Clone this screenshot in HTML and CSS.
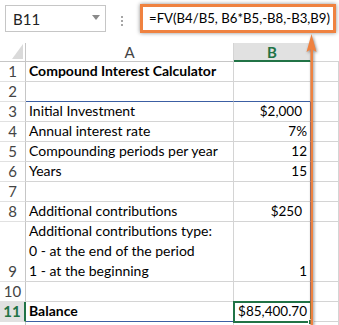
FILE: index.html
```html
<!DOCTYPE html>
<html lang="en">
<head>
  <meta charset="UTF-8">
  <title>Compound Interest Calculator</title>
  <link rel="stylesheet" href="styles.css">
</head>
<body>
  <div class="window">
    <div class="toolbar">
      <div class="namebox">
        <span>B11</span>
        <svg class="drop" width="8" height="5" viewBox="0 0 8 5"><path d="M0 0H8L4 5Z" fill="#8a8a8a"/></svg>
      </div>
      <div class="dots"><i></i><i></i><i></i></div>
      <div class="formula">=FV(B4/B5, B6*B5,-B8,-B3,B9)</div>
    </div>

    <div class="sheet">
      <!-- header row -->
      <div class="corner">
        <svg width="11" height="15" viewBox="0 0 11 15"><path d="M0 15H11V0Z" fill="#dadada"/></svg>
      </div>
      <div class="colhead">A</div>
      <div class="colhead active">B</div>
      <div class="colhead blank"></div>

      <div class="rowhead">1</div>
      <div class="cell bold">Compound Interest Calculator</div>
      <div class="cell"></div>
      <div class="cell"></div>

      <div class="rowhead">2</div>
      <div class="cell blue-bottom"></div>
      <div class="cell blue-bottom"></div>
      <div class="cell"></div>

      <div class="rowhead">3</div>
      <div class="cell">Initial Investment</div>
      <div class="cell num cur blue-right">$2,000</div>
      <div class="cell"></div>

      <div class="rowhead">4</div>
      <div class="cell">Annual interest rate</div>
      <div class="cell num blue-right">7%</div>
      <div class="cell"></div>

      <div class="rowhead">5</div>
      <div class="cell">Compounding periods per year</div>
      <div class="cell num blue-right">12</div>
      <div class="cell"></div>

      <div class="rowhead">6</div>
      <div class="cell">Years</div>
      <div class="cell num blue-right">15</div>
      <div class="cell"></div>

      <div class="rowhead">7</div>
      <div class="cell"></div>
      <div class="cell blue-right"></div>
      <div class="cell"></div>

      <div class="rowhead">8</div>
      <div class="cell">Additional contributions</div>
      <div class="cell num cur blue-right">$250</div>
      <div class="cell"></div>

      <div class="rowhead">9</div>
      <div class="cell">Additional contributions type:<br>0 - at the end of the period<br>1 - at the beginning</div>
      <div class="cell num blue-right">1</div>
      <div class="cell"></div>

      <div class="rowhead">10</div>
      <div class="cell"></div>
      <div class="cell blue-right"></div>
      <div class="cell"></div>

      <div class="rowhead active">11</div>
      <div class="cell bold blue-bottom">Balance</div>
      <div class="cell num selected">$85,400.70<span class="handle"></span></div>
      <div class="cell"></div>

      <div class="rowhead"></div>
      <div class="cell"></div>
      <div class="cell"></div>
      <div class="cell"></div>
    </div>

    <!-- callout arrow from the formula bar down column B -->
    <svg class="arrow" width="24" height="295" viewBox="0 0 24 295">
      <path d="M11.5 4L6.5 22L11.5 19L16.5 22Z" fill="#ef8240"/>
      <rect x="10.5" y="18" width="2.5" height="280" fill="#ef8240"/>
    </svg>
  </div>
</body>
</html>
```

FILE: styles.css
```css
* {
  box-sizing: border-box;
}
body {
  margin: 0;
  background: #fff;
  font-family: Lato, "Liberation Sans", sans-serif;
  font-size: 14px;
  color: #000;
}
.window {
  position: relative;
  width: 339px;
  height: 325px;
  overflow: hidden;
}

/* formula bar */
.toolbar {
  height: 43px;
  display: flex;
  align-items: flex-start;
  padding: 5px 0 0 5px;
}
.namebox {
  width: 101px;
  height: 27px;
  border: 1px solid #c6c6c6;
  display: flex;
  align-items: center;
  justify-content: space-between;
  padding: 0 5px 0 7px;
  color: #222;
  font-size: 15px;
}
.namebox .drop {
  margin-top: -2px;
}
.dots {
  display: flex;
  flex-direction: column;
  gap: 2px;
  margin: 11px 0 0 15px;
}
.dots i {
  width: 2px;
  height: 2px;
  background: #a6a6a6;
}
.formula {
  margin: -1px 0 0 17px;
  width: 196px;
  height: 29px;
  border: 3px solid #ef8240;
  box-shadow: 0 0 4px rgba(0,0,0,0.45);
  padding: 0 0 0 6px;
  line-height: 23px;
  font-size: 13.2px;
  white-space: nowrap;
  overflow: hidden;
}

/* grid */
.sheet {
  display: grid;
  grid-template-columns: 26px 208px 77px 28px;
  grid-template-rows: 19px repeat(8, 20px) 60px 20px 20px 20px;
}
.corner {
  border-right: 1px solid #c6c6c6;
  border-bottom: 1px solid #c6c6c6;
  display: flex;
  align-items: flex-end;
  justify-content: flex-end;
  padding: 0 2px 2px 0;
}
.colhead {
  border-right: 1px solid #d4d4d4;
  border-bottom: 1px solid #c6c6c6;
  text-align: center;
  color: #444;
  line-height: 18px;
  font-size: 15px;
}
.colhead.blank {
  border-right: none;
  border-bottom: 1px solid #d4d4d4;
}
.colhead.active {
  background: #e1e1e1;
  border-bottom: 2px solid #217346;
  color: #217346;
  font-weight: bold;
}
.rowhead {
  border-right: 1px solid #c6c6c6;
  border-bottom: 1px solid #e1e1e1;
  color: #444;
  text-align: center;
  display: flex;
  align-items: flex-end;
  justify-content: center;
  line-height: 20px;
  font-size: 15px;
}
.rowhead.active {
  background: #e1e1e1;
  border-right: 2px solid #217346;
  color: #217346;
  font-weight: bold;
}
.cell {
  border-right: 1px solid #d4d4d4;
  border-bottom: 1px solid #d4d4d4;
  display: flex;
  align-items: flex-end;
  padding: 0 3px;
  line-height: 20px;
  white-space: nowrap;
}
.cell.bold {
  font-weight: bold;
}
.num {
  justify-content: flex-end;
  font-size: 13.5px;
}
.num.cur {
  padding-right: 8px;
}
.blue-bottom {
  border-bottom-color: #3c5fa3;
}
.blue-right {
  border-right-color: #3c5fa3;
}
.selected {
  position: relative;
  outline: 2px solid #217346;
  outline-offset: -1px;
  border-right-color: #3c5fa3;
}
.handle {
  position: absolute;
  right: -4px;
  bottom: -4px;
  width: 6px;
  height: 6px;
  background: #217346;
  border: 1px solid #fff;
}

.arrow {
  position: absolute;
  left: 300px;
  top: 30px;
  filter: drop-shadow(1px 1px 1.5px rgba(0,0,0,0.45));
}
```
